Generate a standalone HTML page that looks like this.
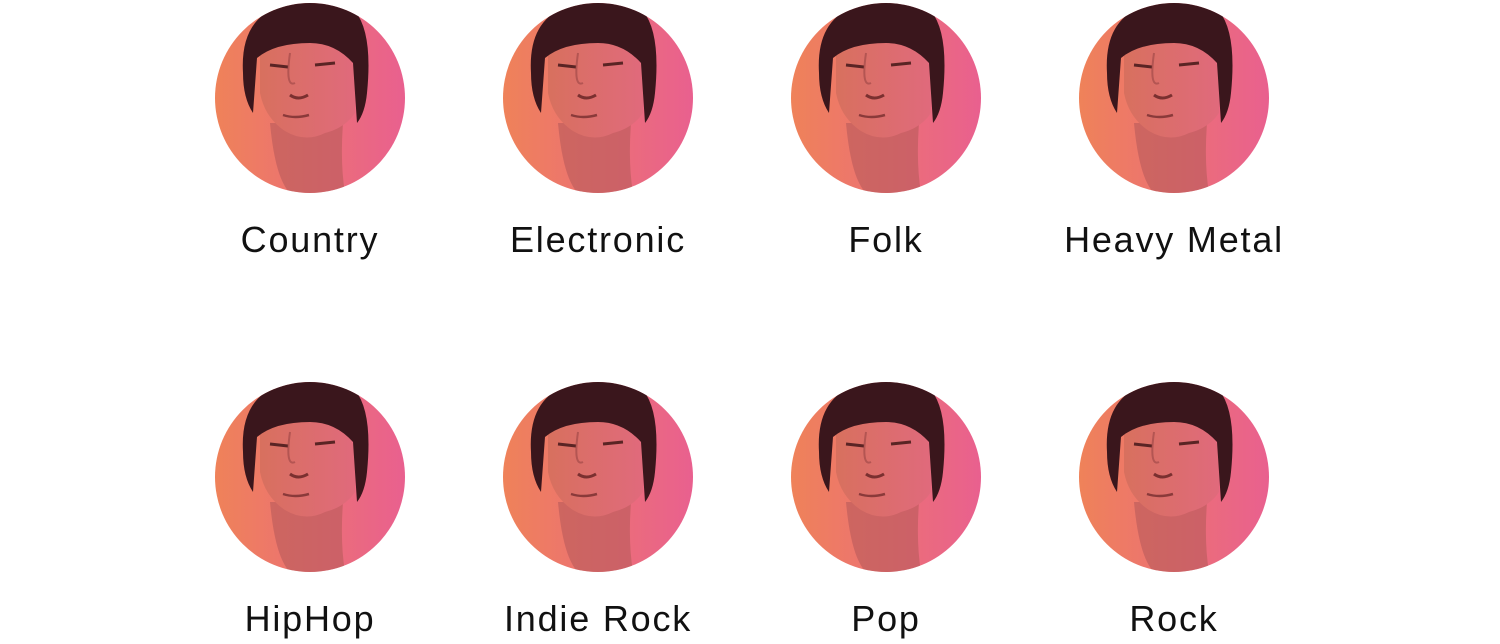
<!DOCTYPE html>
<html><head><style>
html,body{margin:0;padding:0;background:#fff;width:1500px;height:644px;overflow:hidden}
.item{position:absolute;width:288px;text-align:center}
.item svg{display:block;margin:0 auto}
.lbl{position:absolute;left:0;width:288px;text-align:center;font-family:"Liberation Sans",sans-serif;font-size:36px;letter-spacing:1.8px;color:#111;line-height:36px}
</style></head><body>
<svg width="0" height="0" style="position:absolute">
<defs>
<linearGradient id="g" x1="0" x2="1" y1="0" y2="0"><stop offset="0" stop-color="#ef8259"/><stop offset="1" stop-color="#e9608f"/></linearGradient>
<linearGradient id="sk" x1="0" x2="1"><stop offset="0" stop-color="#d8705e"/><stop offset="1" stop-color="#e06a7c"/></linearGradient>
<clipPath id="c"><circle cx="95" cy="95" r="95"/></clipPath>
<g id="face">
<circle cx="95" cy="95" r="95" fill="url(#g)"/>
<g clip-path="url(#c)">
<path d="M55 120 Q60 175 75 190 L130 190 Q125 160 128 120 Z" fill="#b85a5a" opacity=".6"/>
<path d="M45 50 Q50 35 95 38 Q135 40 140 70 L140 110 Q130 125 110 130 Q90 140 70 128 Q50 115 45 90 Z" fill="url(#sk)"/>
<path d="M28 70 Q25 20 60 5 Q100 -8 140 8 Q158 30 152 90 Q150 110 142 120 L138 60 Q120 40 95 40 Q60 40 42 55 L38 110 Q28 95 28 70 Z" fill="#3a161c"/>
<path d="M55 62 l18 2 M100 62 l20 -2" stroke="#5a2424" stroke-width="3"/>
<path d="M75 92 q8 6 18 0" stroke="#7a3030" stroke-width="3" fill="none"/>
<path d="M68 112 q12 4 26 0" stroke="#8a3a3a" stroke-width="2.5" fill="none"/>
<path d="M80 80 q-10 5 -5 -30" stroke="#9a4444" stroke-width="2" fill="none" opacity=".6"/>
</g>
</g>
</defs></svg>

<div class="item" style="left:166px;top:3px"><svg width="190" height="190"><use href="#face"/></svg><div class="lbl" style="top:219px">Country</div></div>
<div class="item" style="left:454px;top:3px"><svg width="190" height="190"><use href="#face"/></svg><div class="lbl" style="top:219px">Electronic</div></div>
<div class="item" style="left:742px;top:3px"><svg width="190" height="190"><use href="#face"/></svg><div class="lbl" style="top:219px">Folk</div></div>
<div class="item" style="left:1030px;top:3px"><svg width="190" height="190"><use href="#face"/></svg><div class="lbl" style="top:219px">Heavy Metal</div></div>

<div class="item" style="left:166px;top:382px"><svg width="190" height="190"><use href="#face"/></svg><div class="lbl" style="top:219px">HipHop</div></div>
<div class="item" style="left:454px;top:382px"><svg width="190" height="190"><use href="#face"/></svg><div class="lbl" style="top:219px">Indie Rock</div></div>
<div class="item" style="left:742px;top:382px"><svg width="190" height="190"><use href="#face"/></svg><div class="lbl" style="top:219px">Pop</div></div>
<div class="item" style="left:1030px;top:382px"><svg width="190" height="190"><use href="#face"/></svg><div class="lbl" style="top:219px">Rock</div></div>
</body></html>
